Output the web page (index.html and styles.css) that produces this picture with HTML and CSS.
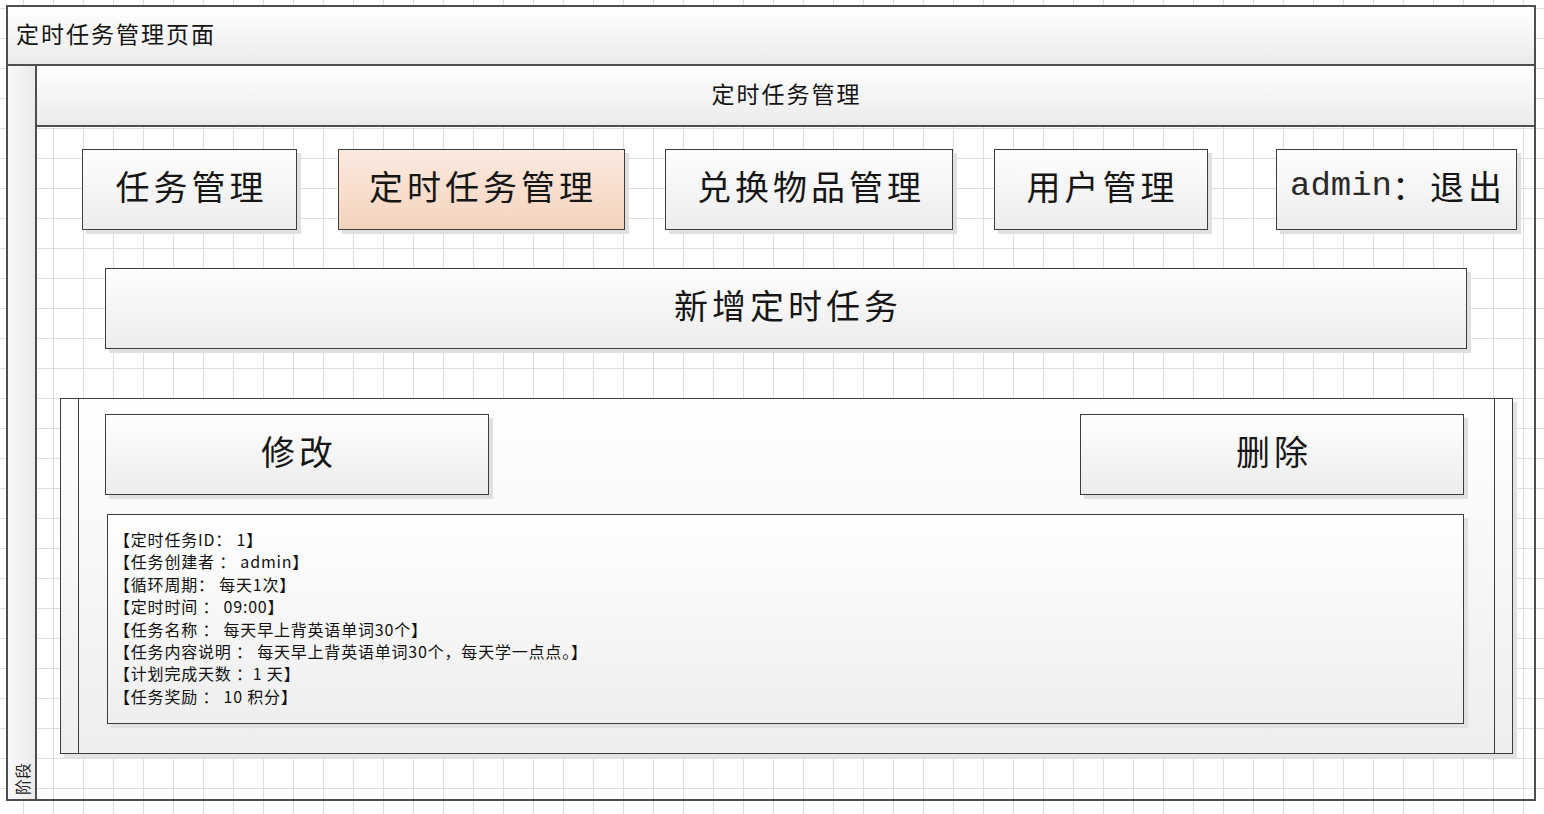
FILE: index.html
```html
<!DOCTYPE html>
<html lang="zh-CN">
<head>
<meta charset="utf-8">
<title>定时任务管理页面</title>
<link rel="stylesheet" href="styles.css">
</head>
<body>
<div class="pool">
  <div class="pool-title">定时任务管理页面</div>
  <div class="pool-body">
    <div class="phase"><span class="phase-label">阶段</span></div>
    <div class="lane">
      <div class="lane-header">定时任务管理</div>
      <div class="lane-content">
        <div class="nav">
          <div class="btn btn-w1">任务管理</div>
          <div class="btn btn-w2 btn-active">定时任务管理</div>
          <div class="btn btn-w3">兑换物品管理</div>
          <div class="btn btn-w4">用户管理</div>
          <div class="btn btn-w5 btn-logout"><span class="latin">admin</span>：退出</div>
        </div>
        <div class="btn btn-add">新增定时任务</div>
        <div class="panel">
          <div class="panel-side panel-side-left"></div>
          <div class="panel-main">
            <div class="actions">
              <div class="btn btn-action">修改</div>
              <div class="btn btn-action">删除</div>
            </div>
            <div class="details">
              <div>【定时任务ID： 1】</div>
              <div>【任务创建者 ： admin】</div>
              <div>【循环周期： 每天1次】</div>
              <div>【定时时间 ： 09:00】</div>
              <div>【任务名称 ： 每天早上背英语单词30个】</div>
              <div>【任务内容说明 ： 每天早上背英语单词30个，每天学一点点。】</div>
              <div>【计划完成天数 ：1 天】</div>
              <div>【任务奖励 ： 10 积分】</div>
            </div>
          </div>
          <div class="panel-side panel-side-right"></div>
        </div>
      </div>
    </div>
  </div>
</div>
</body>
</html>
```

FILE: styles.css
```css
html, body {
  margin: 0;
  padding: 0;
}

body {
  width: 1544px;
  height: 814px;
  overflow: hidden;
  background-color: #ffffff;
  background-image:
    linear-gradient(to right, #dddddd 1px, transparent 1px),
    linear-gradient(to bottom, #dddddd 1px, transparent 1px);
  background-size: 30px 30px;
  background-position: 23px 8px;
  font-family: "Noto Sans CJK SC", "Noto Sans", sans-serif;
  color: #141414;
}

.pool {
  margin: 5px 0 0 6px;
  width: 1530px;
  height: 796px;
  box-sizing: border-box;
  border: 2px solid #4e4e4e;
  display: flex;
  flex-direction: column;
}

.pool-title {
  flex-shrink: 0;
  height: 57px;
  box-sizing: border-box;
  height: 59px;
  border-bottom: 2px solid #4e4e4e;
  background: linear-gradient(#ffffff, #ebebeb);
  display: flex;
  align-items: center;
  padding: 0 0 5px 8px;
  font-size: 23px;
  line-height: 1;
  letter-spacing: 2px;
}

.pool-body {
  flex: 1;
  display: flex;
  min-height: 0;
}

.phase {
  flex-shrink: 0;
  width: 27px;
  border-right: 2px solid #4e4e4e;
  background: linear-gradient(to right, #f9f9f9, #ebebeb);
  display: flex;
  flex-direction: column;
  justify-content: flex-end;
  align-items: center;
  padding-bottom: 4px;
  box-sizing: content-box;
}

.phase-label {
  writing-mode: vertical-rl;
  text-orientation: sideways;
  transform: rotate(180deg);
  font-size: 16px;
  line-height: 16px;
  color: #222;
}

.lane {
  flex: 1;
  display: flex;
  flex-direction: column;
}

.lane-header {
  flex-shrink: 0;
  box-sizing: border-box;
  height: 61px;
  border-bottom: 2px solid #4e4e4e;
  background: linear-gradient(#ffffff, #ebebeb);
  display: flex;
  align-items: center;
  justify-content: center;
  font-size: 23px;
  line-height: 1;
  letter-spacing: 2px;
  padding: 0 0 4px 2px;
}

.lane-content {
  flex: 1;
  padding-top: 22px;
}

.nav {
  display: flex;
  column-gap: 40.5px;
  padding-left: 45px;
}

.btn {
  box-sizing: border-box;
  height: 81px;
  border: 1px solid #3d3d3d;
  background: linear-gradient(#fefefe, #ececec);
  box-shadow: 4px 4px 0 #e0e0e0;
  display: flex;
  align-items: center;
  justify-content: center;
  font-size: 34px;
  line-height: 1;
  letter-spacing: 4px;
  padding: 0 0 8px 4px;
  white-space: nowrap;
  color: #161616;
}

.btn-w1 { width: 215px; }
.btn-w2 { width: 287px; }
.btn-w3 { width: 288px; }
.btn-w4 { width: 214px; }
.btn-w5 { width: 241px; margin-left: 27.5px; }

.btn-active {
  background: linear-gradient(#fbeae0, #f5d3bd);
}

.latin {
  font-family: "Liberation Mono", monospace;
  letter-spacing: 0;
  color: #2a2a2a;
}

.btn-add {
  margin: 38px 67px 0 68px;
}

.panel {
  margin: 49px 21px 0 23px;
  height: 356px;
  box-sizing: border-box;
  border: 1px solid #3d3d3d;
  background: linear-gradient(#ffffff, #eeeeee);
  box-shadow: 4px 4px 0 #e2e2e2;
  display: flex;
}

.panel-side {
  flex-shrink: 0;
  width: 17px;
}

.panel-side-left {
  border-right: 1px solid #3d3d3d;
}

.panel-side-right {
  border-left: 1px solid #3d3d3d;
}

.panel-main {
  flex: 1;
  padding: 15px 30px 0 26px;
}

.actions {
  display: flex;
  justify-content: space-between;
}

.btn-action {
  width: 384px;
}

.details {
  box-sizing: border-box;
  margin: 19px 0 0 2px;
  height: 210px;
  border: 1px solid #3d3d3d;
  background: linear-gradient(#ffffff, #eeeeee);
  box-shadow: 4px 4px 0 #e2e2e2;
  padding: 13px 0 0 6px;
  font-size: 16px;
  line-height: 22.4px;
  letter-spacing: 0.8px;
  color: #111;
}
```
